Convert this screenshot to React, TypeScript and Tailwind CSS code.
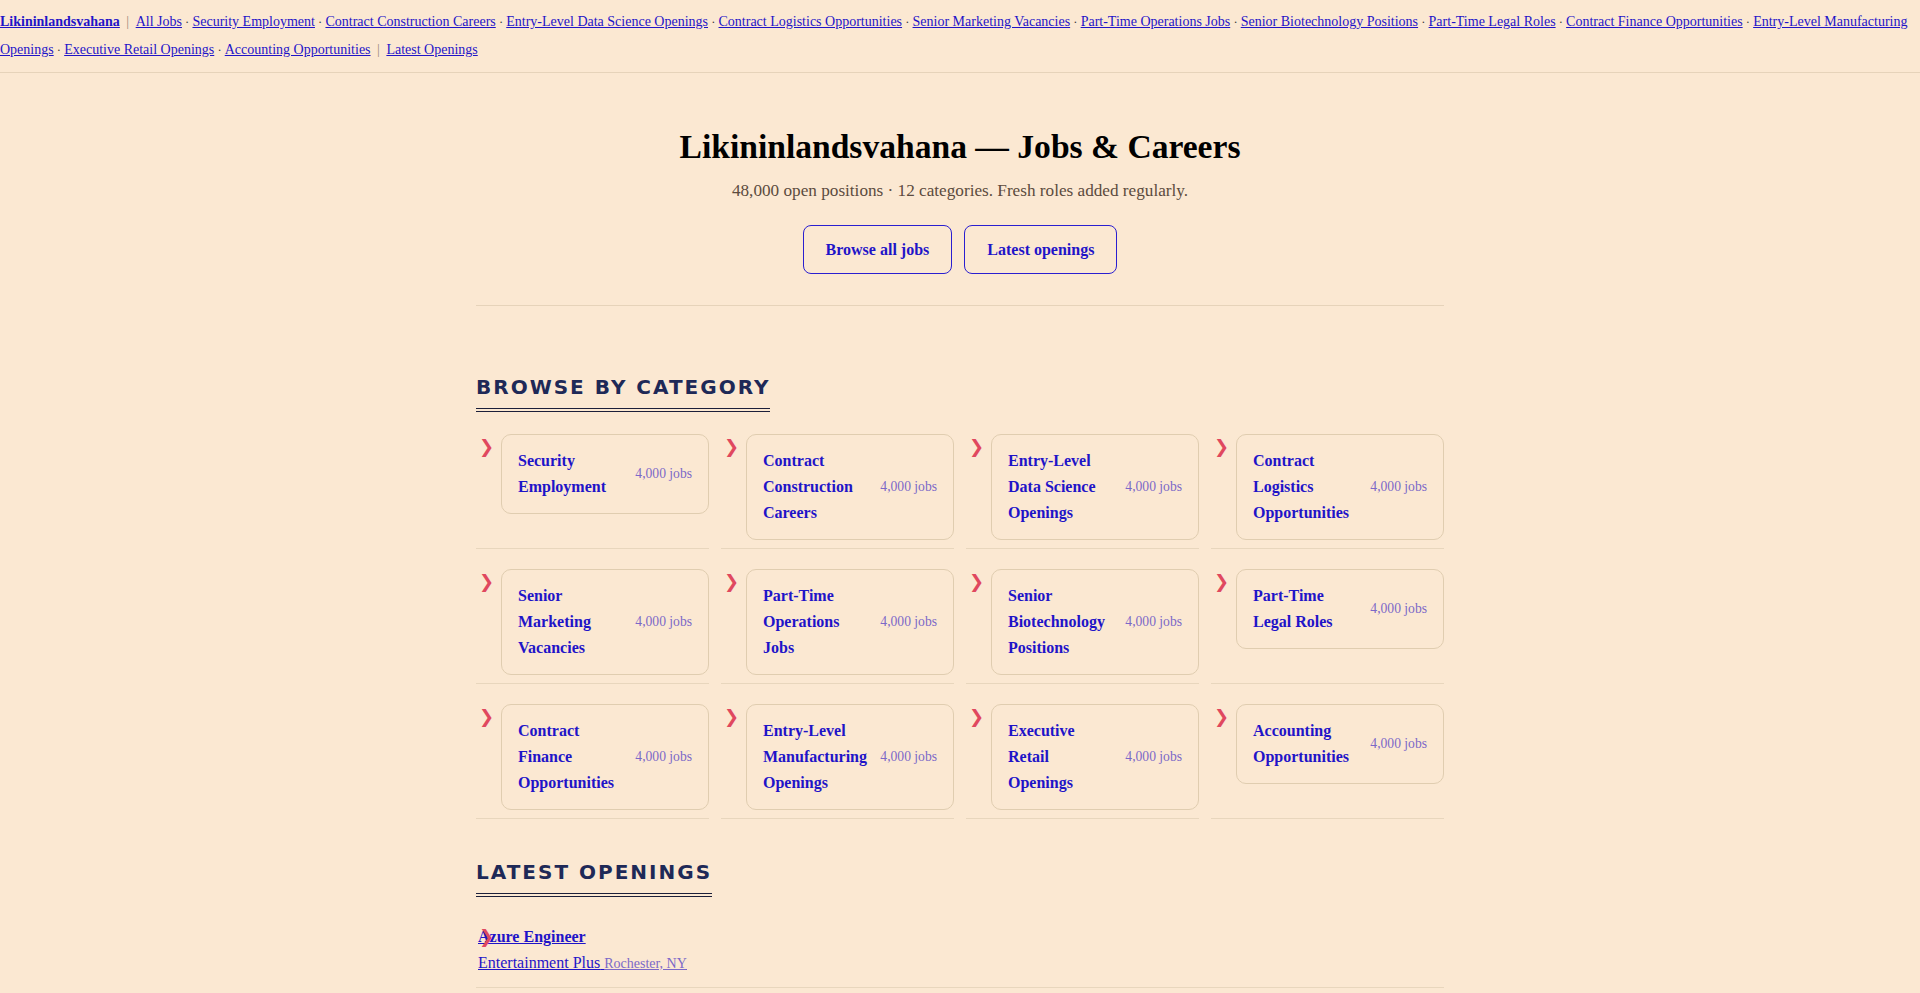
import React from 'react';

const categories = [
  'Security Employment',
  'Contract Construction Careers',
  'Entry-Level Data Science Openings',
  'Contract Logistics Opportunities',
  'Senior Marketing Vacancies',
  'Part-Time Operations Jobs',
  'Senior Biotechnology Positions',
  'Part-Time Legal Roles',
  'Contract Finance Opportunities',
  'Entry-Level Manufacturing Openings',
  'Executive Retail Openings',
  'Accounting Opportunities',
];

const linkCls = 'text-[#1f14c8] underline';

const TopNav = () => (
  <nav className="border-b border-[#e6d3ba] py-2 text-[14px] leading-[28px] text-[#3a3a3a]">
    <a href="#" className={`${linkCls} font-bold`}>Likininlandsvahana</a>
    <span className="mx-[3px] text-[#9a8a7a]"> | </span>
    <a href="#" className={linkCls}>All Jobs</a>
    {categories.map((c) => (
      <React.Fragment key={c}>
        <span className="text-[12.6px]"> · </span>
        <a href="#" className={linkCls}>{c}</a>
      </React.Fragment>
    ))}
    <span className="mx-[3px] text-[#9a8a7a]"> | </span>
    <a href="#" className={linkCls}>Latest Openings</a>
  </nav>
);

const SectionTitle = ({ children }: { children: React.ReactNode }) => (
  <h2 className="inline-block border-b-4 border-double border-[#1c1f3a] pb-2 font-['DejaVu_Sans',sans-serif] text-[20px] font-bold uppercase leading-[26px] tracking-[0.1em] text-[#1e2957]">
    {children}
  </h2>
);

const Chevron = () => (
  <span className="font-['DejaVu_Sans',sans-serif] text-[18px] leading-[26px] text-[#e0485f]">❯</span>
);

export default function App() {
  return (
    <div className="min-h-screen bg-[#fbe8d2] font-['Liberation_Serif',serif] text-[#222]">
      <TopNav />

      <main className="mx-auto w-[968px]">
        <header className="border-b border-[#e6d3ba] pt-[54px] pb-[31px] text-center">
          <h1 className="text-[33.6px] font-bold leading-[40px] text-black">Likininlandsvahana — Jobs &amp; Careers</h1>
          <p className="mt-[11px] text-[17.2px] leading-[26px] text-[#5b4b3e]">
            48,000 open positions · 12 categories. Fresh roles added regularly.
          </p>
          <div className="mt-[21px] flex justify-center gap-3">
            <a href="#" className="flex h-[49px] items-center rounded-lg border border-[#2a1fd0] px-[22px] text-[16px] font-bold text-[#1f14c8]">
              Browse all jobs
            </a>
            <a href="#" className="flex h-[49px] items-center rounded-lg border border-[#2a1fd0] px-[22px] text-[16px] font-bold text-[#1f14c8]">
              Latest openings
            </a>
          </div>
        </header>

        <section className="mt-[68px]">
          <SectionTitle>Browse by category</SectionTitle>
          <ul className="mt-[14px] grid grid-cols-4 gap-x-3 gap-y-3">
            {categories.map((c) => (
              <li key={c} className="flex items-start border-b border-[#e8d6bd] py-2">
                <span className="w-[25px] flex-none pl-[3px]">
                  <Chevron />
                </span>
                <a href="#" className="flex flex-1 items-center gap-3 rounded-[10px] border border-[#e0cdb0] px-4 py-[13px]">
                  <span className="min-w-0 flex-1 text-[16px] font-bold leading-[26px] text-[#1f14c8]">{c}</span>
                  <span className="flex-none whitespace-nowrap text-[13.6px] text-[#7b68c8]">4,000 jobs</span>
                </a>
              </li>
            ))}
          </ul>
        </section>

        <section className="mt-[40px]">
          <SectionTitle>Latest openings</SectionTitle>
          <ul className="mt-[17px]">
            <li className="relative border-b border-[#e8d6bd] py-[10px] pl-[2px] text-[16px] leading-[26px]">
              <span className="absolute left-[3px] top-[10px]">
                <Chevron />
              </span>
              <div>
                <a href="#" className="font-bold text-[#1f14c8] underline">Azure Engineer</a>
              </div>
              <div>
                <a href="#" className="text-[#1f14c8] underline">
                  Entertainment Plus{' '}
                  <span className="text-[14px] text-[#7b68c8] underline">Rochester, NY</span>
                </a>
              </div>
            </li>
          </ul>
        </section>
      </main>
    </div>
  );
}
